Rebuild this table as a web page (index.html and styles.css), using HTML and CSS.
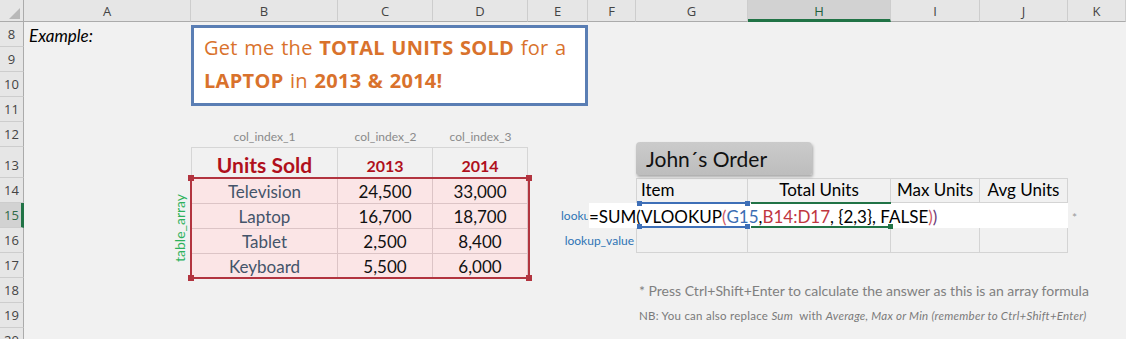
FILE: index.html
```html
<!DOCTYPE html>
<html>
<head>
<meta charset="utf-8">
<title>VLOOKUP array example</title>
<link rel="stylesheet" href="styles.css">
</head>
<body>
<div class="sheet">
  <div class="corner"><svg width="24" height="22" viewBox="0 0 24 22"><polygon points="9,19 20,19 20,8" fill="#b8b8b8"/></svg></div>
  <div class="ch">A</div>
  <div class="ch">B</div>
  <div class="ch">C</div>
  <div class="ch">D</div>
  <div class="ch">E</div>
  <div class="ch">F</div>
  <div class="ch">G</div>
  <div class="ch ch-sel">H</div>
  <div class="ch">I</div>
  <div class="ch">J</div>
  <div class="ch">K</div>

  <div class="rh">8</div>
  <div class="rh">9</div>
  <div class="rh">10</div>
  <div class="rh">11</div>
  <div class="rh">12</div>
  <div class="rh">13</div>
  <div class="rh">14</div>
  <div class="rh rh-sel">15</div>
  <div class="rh">16</div>
  <div class="rh">17</div>
  <div class="rh">18</div>
  <div class="rh">19</div>
  <div class="rh">20</div>

  <div class="example">Example:</div>

  <div class="callout">
    <div class="callout-line">Get me the <b>TOTAL UNITS SOLD</b> for a</div>
    <div class="callout-line"><b>LAPTOP</b> in <b>2013 &amp; 2014!</b></div>
  </div>

  <div class="ci ci1">col_index_1</div>
  <div class="ci ci2">col_index_2</div>
  <div class="ci ci3">col_index_3</div>

  <div class="data">
    <div class="dc dh">Units Sold</div>
    <div class="dc dy">2013</div>
    <div class="dc dy">2014</div>
    <div class="dc db it">Television</div>
    <div class="dc db num">24,500</div>
    <div class="dc db num">33,000</div>
    <div class="dc db it">Laptop</div>
    <div class="dc db num">16,700</div>
    <div class="dc db num">18,700</div>
    <div class="dc db it">Tablet</div>
    <div class="dc db num">2,500</div>
    <div class="dc db num">8,400</div>
    <div class="dc db it">Keyboard</div>
    <div class="dc db num">5,500</div>
    <div class="dc db num">6,000</div>
  </div>
  <div class="data-sel">
    <span class="hd hd-tl red"></span><span class="hd hd-tr red"></span><span class="hd hd-bl red"></span><span class="hd hd-br red"></span>
  </div>
  <div class="tarr">table_array</div>

  <div class="order-title">John´s Order</div>
  <div class="order">
    <div class="oc oh oh-left">Item</div>
    <div class="oc oh">Total Units</div>
    <div class="oc oh">Max Units</div>
    <div class="oc oh">Avg Units</div>
    <div class="oc"></div>
    <div class="oc"></div>
    <div class="oc"></div>
    <div class="oc"></div>
    <div class="oc"></div>
    <div class="oc"></div>
    <div class="oc"></div>
    <div class="oc"></div>
  </div>

  <div class="lk lk1">lookup_value</div>
  <div class="lk lk2">lookup_value</div>

  <div class="formula">=SUM(VLOOKUP<span class="f-pink">(</span><span class="f-blue">G15</span>,<span class="f-red">B14:D17</span>, {2,3}, FALSE<span class="f-pink">)</span><span class="f-pur">)</span></div>

  <div class="rng rng-blue">
    <span class="hd hd-tl blue"></span><span class="hd hd-tr blue"></span><span class="hd hd-bl blue"></span><span class="hd hd-br blue"></span>
  </div>
  <div class="rng rng-green">
    <span class="hd hd-br green"></span>
  </div>

  <div class="star">*</div>

  <div class="note1">* Press Ctrl+Shift+Enter to calculate the answer as this is an array formula</div>
  <div class="note2">NB: You can also replace <i>Sum</i>&nbsp; with <i>Average, Max or Min (remember to Ctrl+Shift+Enter)</i></div>
</div>
</body>
</html>
```

FILE: styles.css
```css
* { box-sizing: border-box; }

html, body {
  margin: 0;
  padding: 0;
  background: #f1f1f1;
  overflow: hidden;
}

.sheet {
  display: grid;
  grid-template-columns: 24px 167px 147px 95px 95px 60px 48px 112px 143px 89px 88px 1fr;
  grid-template-rows: 22px 25px 25px 25px 25px 25px 31px 25px 25px 25px 25px 25px 25px 25px;
  width: 1126px;
  font-family: Lato, "Open Sans", sans-serif;
  color: #000;
}

/* headers */
.corner {
  background: #e6e6e6;
  border-right: 1px solid #ababab;
  border-bottom: 1px solid #ababab;
}
.corner svg { display: block; }

.ch {
  background: #e6e6e6;
  border-bottom: 1px solid #ababab;
  border-right: 1px solid #cdcdcd;
  font-family: "Open Sans", "Noto Sans", sans-serif;
  font-size: 13px;
  color: #444;
  display: flex;
  align-items: center;
  justify-content: center;
  padding-top: 1px;
}
.ch-sel {
  background: #d2d2d2;
  color: #1f5f3c;
  border-bottom: 3px solid #217346;
  padding-top: 3px;
}

.rh {
  grid-column: 1;
  background: #e6e6e6;
  border-right: 1px solid #ababab;
  border-bottom: 1px solid #cdcdcd;
  font-family: "Open Sans", "Noto Sans", sans-serif;
  font-size: 13px;
  color: #444;
  display: flex;
  align-items: flex-end;
  justify-content: center;
  padding-bottom: 3px;
}
.rh-sel {
  background: #d2d2d2;
  color: #2f6a47;
  border-right: 3px solid #217346;
  padding-left: 2px;
}

/* Example */
.example {
  grid-area: 2 / 2 / 3 / 3;
  font-style: italic;
  font-size: 17px;
  padding: 3px 0 0 5px;
}

/* callout */
.callout {
  grid-area: 2 / 3 / 6 / 7;
  margin-top: 3px;
  height: 81px;
  background: #fff;
  border: 3px solid #5a7eb4;
  padding: 3px 0 0 10px;
  color: #d9722c;
  font-family: "Open Sans", Lato, sans-serif;
  font-size: 20px;
  letter-spacing: 0.3px;
  word-spacing: 1px;
}
.callout-line {
  height: 33px;
  line-height: 33px;
  white-space: nowrap;
}
.callout b { font-weight: 700; }

/* col_index labels */
.ci {
  grid-row: 6;
  font-size: 12px;
  color: #8a8a8a;
  display: flex;
  align-items: flex-end;
  justify-content: center;
  padding-bottom: 3px;
}
.ci1 { grid-column: 3; }
.ci2 { grid-column: 4; }
.ci3 { grid-column: 5; }

/* data table */
.data {
  grid-area: 7 / 3 / 12 / 6;
  display: grid;
  grid-template-columns: 147px 95px 95px;
  grid-template-rows: 31px 25px 25px 25px 25px;
}
.dc {
  display: flex;
  align-items: center;
  justify-content: center;
  border-right: 1px solid #d6d6d6;
  border-top: 1px solid #d6d6d6;
}
.dc:nth-child(3n+1) { border-left: 1px solid #d6d6d6; }
.dh {
  color: #b0101c;
  font-weight: 700;
  font-size: 21px;
  padding-top: 2px;
}
.dy {
  color: #b0101c;
  font-weight: 700;
  font-size: 16px;
  padding-top: 5px;
}
.db {
  background: #fbe5e6;
  border-color: #dcc4c6;
  font-size: 17px;
}
.it { color: #44546a; }
.num { color: #111; }

.data-sel {
  grid-area: 8 / 3 / 12 / 6;
  margin: -1px -2px -1px -1px;
  border: 2px solid #b2343f;
  position: relative;
}

.hd {
  position: absolute;
  width: 6px;
  height: 6px;
}
.hd.red { background: #b2343f; }
.hd.blue { background: #3e6fb7; width: 5px; height: 5px; }
.hd.green { background: #217346; width: 5px; height: 5px; }
.hd-tl { left: -4px; top: -4px; }
.hd-tr { right: -4px; top: -4px; }
.hd-bl { left: -4px; bottom: -4px; }
.hd-br { right: -4px; bottom: -4px; }
.rng .hd-tl, .rng .hd-bl { left: -2px; }
.rng .hd-tr, .rng .hd-br { right: -2px; }
.rng .hd-tl, .rng .hd-tr { top: -3px; }
.rng .hd-bl, .rng .hd-br { bottom: -3px; }

.tarr {
  grid-area: 8 / 2 / 12 / 3;
  justify-self: end;
  align-self: center;
  writing-mode: vertical-rl;
  transform: rotate(180deg);
  color: #2db15c;
  font-size: 14px;
  margin-right: 3px;
}

/* John's order */
.order-title {
  grid-area: 7 / 8 / 8 / 10;
  align-self: start;
  justify-self: start;
  margin-top: -5px;
  width: 176px;
  height: 33px;
  background: linear-gradient(#cbcbcb, #bdbdbd);
  border-radius: 4px 4px 2px 2px;
  box-shadow: 1px 2px 3px rgba(0, 0, 0, 0.3);
  font-size: 21px;
  color: #111;
  padding-left: 10px;
  line-height: 33px;
  position: relative;
  z-index: 1;
}

.order {
  grid-area: 8 / 8 / 11 / 12;
  display: grid;
  grid-template-columns: 112px 143px 89px 88px;
  grid-template-rows: 25px 25px 25px;
}
.oc {
  border-right: 1px solid #d4d4d4;
  border-bottom: 1px solid #d4d4d4;
  display: flex;
  align-items: flex-end;
  justify-content: center;
  font-size: 17px;
  padding-bottom: 2px;
}
.oc:nth-child(4n+1) { border-left: 1px solid #d4d4d4; }
.oc:nth-child(-n+4) { border-top: 1px solid #d4d4d4; }
.oh-left { justify-content: flex-start; padding-left: 4px; }

/* lookup labels */
.lk {
  font-size: 12px;
  color: #2e74b5;
  display: flex;
  align-items: center;
  white-space: nowrap;
  overflow: hidden;
}
.lk1 {
  grid-area: 9 / 6 / 10 / 7;
  justify-content: flex-start;
  padding-left: 33px;
}
.lk2 {
  grid-area: 10 / 6 / 11 / 8;
  justify-content: flex-end;
  padding-right: 2px;
}

/* formula overlay */
.formula {
  grid-area: 9 / 7 / 10 / 12;
  margin-left: 1px;
  background: #fff;
  font-size: 17px;
  white-space: nowrap;
  overflow: hidden;
  display: flex;
  align-items: center;
  padding-top: 1px;
  position: relative;
  z-index: 2;
}
.f-pink { color: #cf5866; }
.f-blue { color: #3b6db3; }
.f-red { color: #c0363f; }
.f-pur { color: #6c3a78; }

.rng {
  position: relative;
  z-index: 3;
  margin-top: -1px;
}
.rng-blue {
  grid-area: 9 / 8 / 10 / 9;
  border-top: 2px solid #3e6fb7;
  border-bottom: 2px solid #3e6fb7;
  margin-left: 3px;
}
.rng-green {
  grid-area: 9 / 9 / 10 / 10;
  border-top: 2px solid #217346;
  border-bottom: 2px solid #217346;
  margin-left: 3px;
}

.star {
  grid-area: 9 / 12 / 10 / 13;
  color: #9a9a9a;
  font-size: 12px;
  padding: 7px 0 0 4px;
}

/* notes */
.note1 {
  grid-area: 12 / 8 / 13 / 13;
  color: #808080;
  font-size: 14px;
  padding: 4px 0 0 3px;
  white-space: nowrap;
}
.note2 {
  grid-area: 13 / 8 / 14 / 13;
  color: #7a7a7a;
  font-size: 11.5px;
  padding: 6px 0 0 3px;
  white-space: nowrap;
  letter-spacing: 0.25px;
}
```
